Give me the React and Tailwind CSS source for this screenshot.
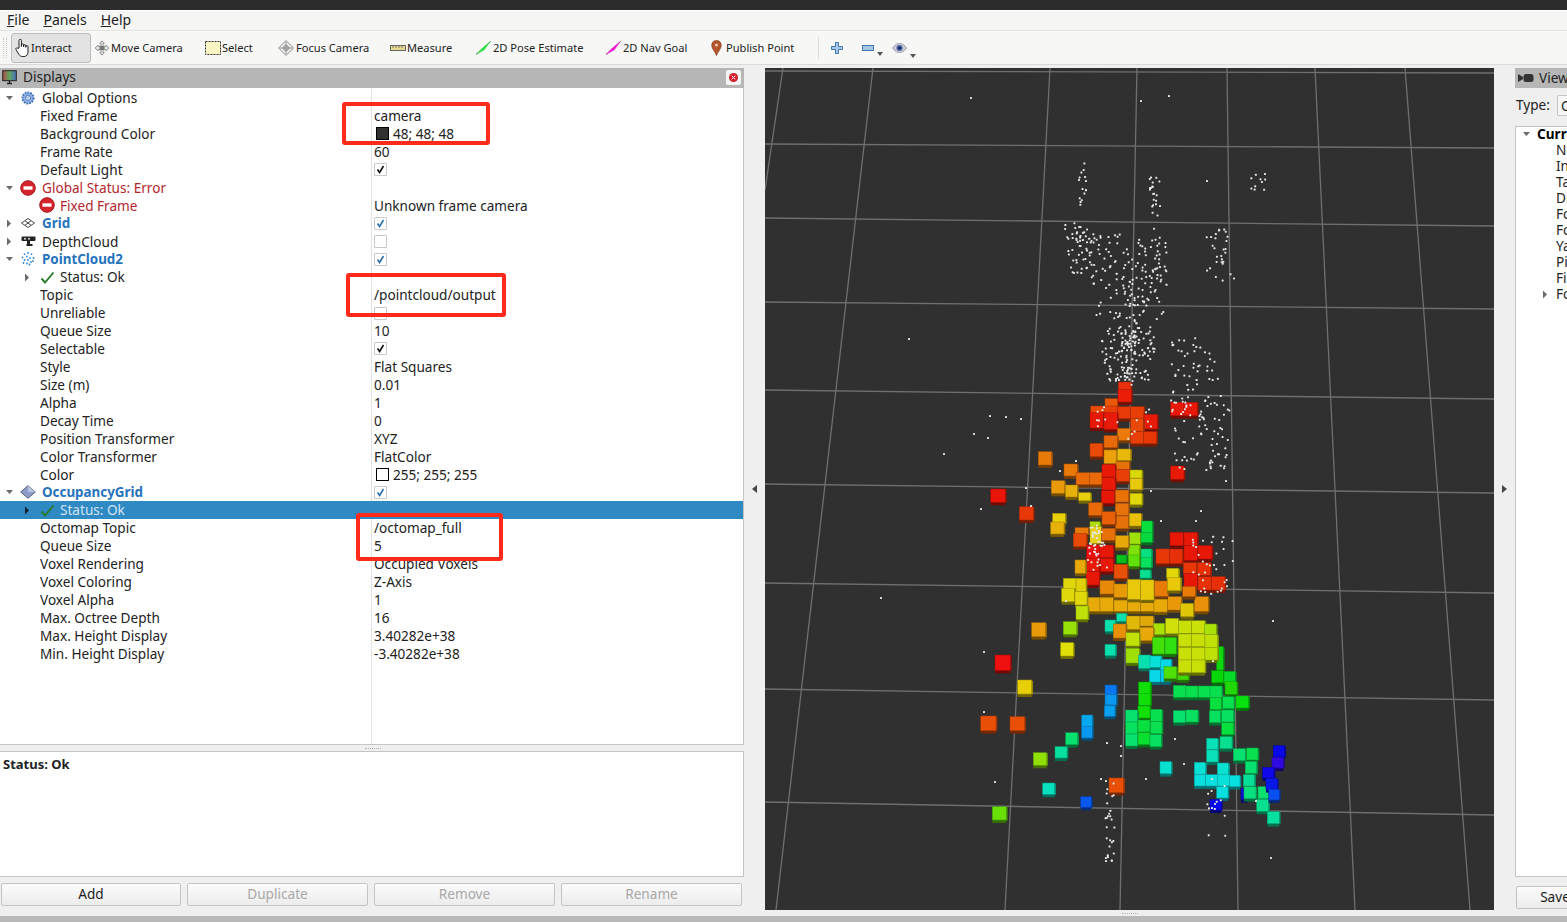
import React from 'react';

const uiFont = { fontFamily: '"Noto Sans", "Liberation Sans", sans-serif' };

function makeRandom(seed) {
  let a = seed;
  return () => {
    a = (a + 0x6d2b79f5) | 0;
    let t = Math.imul(a ^ (a >>> 15), 1 | a);
    t = (t + Math.imul(t ^ (t >>> 7), 61 | t)) ^ t;
    return ((t ^ (t >>> 14)) >>> 0) / 4294967296;
  };
}

// x0, x1 at y0; x2, x3 at y1; count
const dotClusters = [
  [1063, 1085, 1070, 1095, 222, 275, 50],
  [1076, 1086, 1078, 1086, 162, 205, 14],
  [1148, 1158, 1150, 1160, 165, 235, 22],
  [1085, 1170, 1090, 1165, 232, 300, 130],
  [1090, 1165, 1108, 1148, 300, 380, 150],
  [1118, 1135, 1122, 1132, 330, 385, 40],
  [1205, 1225, 1205, 1235, 225, 280, 28],
  [1245, 1265, 1245, 1265, 172, 190, 10],
  [1170, 1200, 1170, 1225, 330, 385, 40],
  [1170, 1230, 1170, 1225, 385, 470, 90],
  [1090, 1100, 1085, 1108, 520, 570, 40],
  [1190, 1232, 1190, 1232, 535, 595, 34],
  [1092, 1150, 1092, 1150, 405, 440, 16],
  [1105, 1115, 1103, 1113, 780, 862, 26],
  [1205, 1225, 1205, 1225, 775, 835, 14],
];

const loneDots = [
  [970, 97], [1168, 95], [908, 338], [880, 597], [943, 453], [987, 437], [973, 433], [1270, 857],
  [1105, 860], [989, 415], [1005, 416], [1020, 418], [980, 508], [1025, 487], [1030, 505], [983, 651],
  [983, 711], [994, 781], [1106, 742], [1120, 745], [1120, 755], [1105, 780], [1145, 778], [1174, 738],
  [1183, 763], [1100, 778], [1212, 660], [1255, 800], [1225, 480], [1200, 510], [1195, 520], [1206, 180],
  [1059, 470], [1075, 460], [1065, 600], [1272, 620], [1160, 520], [1150, 490], [1085, 180], [1140, 100],
];

const rand = makeRandom(42);
const clusterDots = dotClusters.flatMap(([x0, x1, x2, x3, y0, y1, n]) =>
  Array.from({ length: n }, () => {
    const k = rand();
    const left = x0 + (x2 - x0) * k;
    const right = x1 + (x3 - x1) * k;
    return [left + (right - left) * rand(), y0 + (y1 - y0) * k];
  })
);

function darken(hex, f) {
  const n = parseInt(hex.slice(1), 16);
  const c = [(n >> 16) & 255, (n >> 8) & 255, n & 255].map((v) => Math.round(v * f));
  return `rgb(${c[0]},${c[1]},${c[2]})`;
}

// cube coordinates are 3x, relative to the crop they were read from
const upperCubes = [
  [435,86,38,24,'#e85a08'],[475,36,38,30,'#e8300c'],[474,58,40,38,'#ea1e08'],[392,108,40,24,'#ec4808'],
  [432,108,40,30,'#e84008'],[472,110,40,36,'#e83a08'],[512,110,40,36,'#e83e08'],[390,128,40,46,'#e81808'],
  [432,128,40,50,'#e81a0a'],[552,133,40,44,'#e81a08'],[512,146,38,38,'#e84808'],[472,175,40,36,'#ec7a0a'],
  [512,185,40,36,'#e84008'],[550,185,40,36,'#e83808'],[432,197,40,36,'#e86a08'],[432,240,38,40,'#eca00a'],
  [390,220,38,40,'#e84a08'],[472,237,40,34,'#e8b80a'],[632,97,40,40,'#ea1808'],[672,97,40,40,'#e81808'],
  [632,288,40,40,'#e81a08'],[235,245,40,40,'#e87a0a'],[468,275,40,24,'#e87008'],[312,282,40,36,'#ea7a0a'],
  [348,308,40,36,'#e86a08'],[388,308,40,36,'#ea6a08'],[426,283,40,38,'#e81a08'],[468,298,40,36,'#e83e08'],
  [510,300,36,24,'#d8d80a'],[510,325,36,34,'#e8c80a'],[510,370,36,34,'#e0d80a'],[274,332,40,38,'#e89a0a'],
  [316,345,36,36,'#e8b00a'],[356,368,36,24,'#e8d00a'],[426,322,40,38,'#e81a0a'],[424,362,40,38,'#e81808'],
  [466,360,40,36,'#e87208'],[466,400,40,36,'#e8720a'],[466,438,40,38,'#e87008'],[92,357,44,40,'#e81508'],
  [178,410,42,40,'#e83808'],[386,398,40,38,'#e86a08'],[426,425,40,38,'#e86008'],[278,430,38,30,'#e8d00a'],
  [272,456,40,36,'#e8b00a'],[508,430,36,38,'#e8c00a'],[508,488,34,34,'#a0e00a'],[505,525,34,34,'#80e00a'],
  [505,555,34,34,'#60e00a'],[545,453,32,34,'#08e040'],[543,487,34,30,'#08d840'],[543,537,32,28,'#08e080'],
  [543,563,32,30,'#08e060'],[540,600,32,24,'#08e090'],[345,473,40,20,'#e87a0a'],[340,490,40,40,'#e84a08'],
  [390,455,30,24,'#b0e00a'],[390,470,34,50,'#e8d020'],[425,475,40,36,'#e87008'],[466,497,40,36,'#e8a808'],
  [470,555,30,24,'#08c020'],[380,525,40,50,'#e81010'],[420,525,40,38,'#e81808'],[420,565,40,40,'#e81808'],
  [378,565,40,40,'#e81808'],[378,605,40,40,'#e81808'],[345,570,32,40,'#e8a80a'],[462,583,40,42,'#e85008'],
  [588,537,40,44,'#e83808'],[628,537,40,44,'#e83008'],[630,487,40,40,'#e81808'],[672,487,40,40,'#e81808'],
  [672,527,40,44,'#e81808'],[714,527,42,40,'#e81808'],[670,578,40,34,'#e83808'],[712,578,40,38,'#e83008'],
  [672,610,40,42,'#e81808'],[714,620,40,40,'#e83008'],[755,620,40,40,'#e83008'],[310,625,38,32,'#e0d80a'],
  [305,655,38,40,'#e0d80a'],[348,625,30,40,'#e0d00a'],[345,665,36,40,'#e0d80a'],[348,708,36,40,'#c0e00a'],
  [420,632,42,40,'#e88a08'],[462,642,40,40,'#e89a08'],[503,628,38,60,'#e8c808'],[542,630,40,60,'#e8c80a'],
  [584,633,40,46,'#e87a08'],[620,595,36,30,'#e0d808'],[622,622,40,40,'#e8c808'],[668,650,38,30,'#e87a08'],
];

const lowerCubes = [
  [380,-8,40,42,'#e8aa08'],[420,-8,40,42,'#e8aa08'],[462,-8,40,42,'#e8aa08'],[503,-8,38,42,'#e8aa08'],
  [542,-8,40,42,'#e8aa08'],[582,-6,40,42,'#e8aa08'],[622,-10,42,40,'#e89808'],[662,10,38,40,'#e0c808'],
  [703,-10,42,44,'#e89008'],[310,65,40,38,'#98e00a'],[215,68,42,42,'#e89a08'],[302,128,38,40,'#e0e008'],
  [435,133,32,34,'#08e0b0'],[435,60,32,34,'#08e0b0'],[470,40,30,24,'#08e0b0'],[500,48,40,40,'#e0b808'],
  [460,72,38,42,'#e89008'],[540,48,40,30,'#e0a808'],[580,70,34,34,'#a8e008'],[540,82,40,40,'#e8a808'],
  [498,98,40,40,'#c0e008'],[498,145,40,44,'#a0e008'],[578,112,36,50,'#40e008'],[615,112,34,50,'#30e010'],
  [536,165,36,40,'#08e0b0'],[570,168,34,34,'#08e0d8'],[602,178,32,34,'#08d8e8'],[568,210,34,36,'#08d8e8'],
  [602,210,30,36,'#08c8e8'],[650,210,36,30,'#40d808'],[612,200,38,36,'#50e008'],[770,140,20,70,'#10d810'],
  [617,55,38,46,'#d0e008'],[655,62,40,38,'#c8e008'],[695,62,40,38,'#c8e008'],[733,72,36,32,'#a8e008'],
  [655,102,40,38,'#c8e008'],[695,102,40,38,'#c8e008'],[735,104,38,38,'#c0e008'],[655,142,40,38,'#c8e008'],
  [695,142,40,38,'#c8e008'],[735,142,38,38,'#c0e008'],[655,180,40,38,'#c8e008'],[695,180,40,38,'#c8e008'],
  [755,212,36,36,'#08d808'],[792,214,34,36,'#08d828'],[640,256,38,36,'#08e050'],[678,258,36,34,'#08e050'],
  [715,258,36,34,'#08e050'],[750,258,36,34,'#08e050'],[795,245,36,38,'#20d808'],[750,293,34,36,'#08e040'],
  [788,290,34,36,'#08e050'],[828,288,38,36,'#08e010'],[748,332,34,36,'#08e060'],[785,330,36,36,'#08e060'],
  [785,368,36,36,'#08e040'],[640,332,36,36,'#08e070'],[678,330,36,36,'#08e060'],[536,246,36,36,'#10e008'],
  [536,280,36,36,'#10e008'],[534,318,36,36,'#10e008'],[497,330,36,36,'#08e070'],[497,366,36,36,'#08e060'],
  [497,402,36,36,'#08e070'],[534,360,36,36,'#08e040'],[534,398,36,36,'#08e030'],[572,328,34,36,'#08e050'],
  [572,365,34,36,'#08e050'],[570,404,34,36,'#08e060'],[435,255,34,28,'#0878f0'],[435,283,34,32,'#0898f0'],
  [433,317,32,32,'#08a0f0'],[365,345,32,36,'#08a8f0'],[365,380,32,34,'#0898f0'],[362,590,32,32,'#0858f0'],
  [317,398,36,36,'#08e070'],[285,440,36,34,'#08e0a0'],[220,458,40,38,'#90e008'],[248,549,36,34,'#08e0c0'],
  [97,620,42,40,'#68e008'],[105,165,46,46,'#f01010'],[173,240,42,42,'#e8d008'],[62,348,46,44,'#e85008'],
  [150,350,44,42,'#e85008'],[447,534,44,44,'#e85008'],[600,485,34,36,'#08e0d0'],[740,415,34,34,'#08e0b8'],
  [740,450,34,36,'#08e0b8'],[780,410,36,36,'#08e090'],[820,446,36,36,'#08e070'],[860,444,34,36,'#08e050'],
  [856,484,34,36,'#08e070'],[703,487,34,36,'#08e0d8'],[703,524,34,34,'#08e0e0'],[737,524,36,34,'#08e0e0'],
  [772,489,34,36,'#08e0d0'],[772,524,36,34,'#08e0d8'],[808,526,32,34,'#08e0e0'],[770,560,34,34,'#08e0e0'],
  [750,598,34,32,'#0808e8'],[850,524,34,34,'#08e098'],[843,565,20,34,'#1010d0'],[852,560,36,36,'#08e080'],
  [894,560,36,36,'#08e070'],[890,598,36,36,'#08e090'],[922,635,36,36,'#08e0a0'],[940,437,34,34,'#0808e8'],
  [936,472,34,32,'#3008e0'],[908,502,34,32,'#1008e8'],[918,535,34,34,'#0818e8'],[926,568,32,32,'#0850f0'],
];

const gridLines = [
  [783, 68, 765, 190], [873, 68, 776, 910], [1050, 68, 1005, 910], [1137, 68, 1120, 910], [1227, 68, 1238, 910],
  [1315, 68, 1355, 910], [1405, 68, 1470, 910],
  [765, 71, 1494, 73], [765, 144, 1494, 148], [765, 218, 1494, 226], [765, 302, 1494, 309], [765, 390, 1494, 399],
  [765, 484, 1494, 493], [765, 583, 1494, 593], [765, 689, 1494, 700], [765, 802, 1494, 815],
];

function Cube({ c }) {
  const [x, y, w, h, color] = c;
  return (
    <g>
      <rect x={x} y={y + 9} width={w} height={h} fill={darken(color, 0.5)} />
      <rect x={x + w} y={y + 2} width={4} height={h} fill={darken(color, 0.65)} />
      <rect x={x} y={y} width={w} height={h} fill={color} stroke={darken(color, 0.7)} strokeWidth="1.5" />
    </g>
  );
}

function Viewport() {
  return (
    <svg viewBox="765 68 729 842" className="w-[729px] h-[842px] block bg-[#303030]">
      {gridLines.map((l, i) => (
        <line key={i} x1={l[0]} y1={l[1]} x2={l[2]} y2={l[3]} stroke="#6f6f6f" strokeWidth="1.3" />
      ))}
      <g transform="translate(960 600) scale(0.3333)">
        {lowerCubes.map((c, i) => <Cube key={i} c={c} />)}
      </g>
      <g transform="translate(960 370) scale(0.3333)">
        {upperCubes.map((c, i) => <Cube key={i} c={c} />)}
      </g>
      {clusterDots.concat(loneDots).map((d, i) => (
        <rect key={i} x={d[0]} y={d[1]} width="2" height="2" rx="0.6" fill="#e6e6e6" />
      ))}
    </svg>
  );
}

function ArrowDown({ className = '' }) {
  return (
    <svg width="9" height="6" viewBox="0 0 9 6" className={className}><path d="M1 1h7L4.5 5z" fill="#6a6a6a" /></svg>
  );
}

function ArrowRight({ color = '#6a6a6a' }) {
  return (
    <svg width="6" height="9" viewBox="0 0 6 9"><path d="M1 0.5v8L5 4.5z" fill={color} /></svg>
  );
}

function HandIcon() {
  return (
    <svg width="17" height="20" viewBox="0 0 17 20" fill="#fff" stroke="#222" strokeWidth="1">
      <path d="M5 10V2.6a1.2 1.2 0 0 1 2.4 0V8.5V7a1.1 1.1 0 0 1 2.2 0v2V7.8a1.1 1.1 0 0 1 2.2 0v1.6V8.6a1.1 1.1 0 0 1 2.2 0V14c0 2.5-1.5 4.5-4 4.5H8.5c-1.8 0-3-1-3.8-2.4L2 11.6c-.8-1.4 1-2.4 2-1.2z" />
    </svg>
  );
}

function MoveIcon() {
  return (
    <svg width="16" height="16" viewBox="0 0 16 16" fill="#e8e8e8" stroke="#8a8a8a" strokeWidth="0.9">
      <path d="M8 .8l2.4 2.6H9v3h3V5l2.8 3-2.8 3V9.6H9v3h1.4L8 15.2l-2.4-2.6H7v-3H4V11L1.2 8 4 5v1.4h3v-3H5.6z" />
      <rect x="5.5" y="6" width="5" height="4" fill="#777" stroke="none" />
    </svg>
  );
}

function SelectIcon() {
  return (
    <svg width="16" height="14" viewBox="0 0 16 14">
      <rect x="0.5" y="0.5" width="15" height="13" fill="#fbf6c4" stroke="#333" strokeWidth="1" strokeDasharray="2 1" />
    </svg>
  );
}

function FocusIcon() {
  return (
    <svg width="16" height="16" viewBox="0 0 16 16" fill="none" stroke="#8d8d8d" strokeWidth="1">
      <path d="M8 .5L15.5 8 8 15.5.5 8z" fill="#eee" />
      <circle cx="8" cy="8" r="2.6" fill="#ccc" />
      <path d="M8 2v12M2 8h12" />
    </svg>
  );
}

function MeasureIcon() {
  return (
    <svg width="16" height="6" viewBox="0 0 16 6">
      <rect x="0.5" y="0.5" width="15" height="5" fill="#e6d98f" stroke="#666" />
      <path d="M3 1v2M6 1v2M9 1v2M12 1v2" stroke="#666" strokeWidth="0.8" />
    </svg>
  );
}

function ArrowIcon({ color, dark }) {
  return (
    <svg width="16" height="14" viewBox="0 0 16 14">
      <path d="M1 13.500L15.500 .5" stroke={dark} strokeWidth="1" />
      <path d="M1.500 13.500L6.500 7.500 15.500 .5 9.500 9z" fill={color} />
    </svg>
  );
}

function PinIcon() {
  return (
    <svg width="11" height="16" viewBox="0 0 11 16">
      <path d="M5.5.5C2.6.5.7 2.6.7 5.2c0 3.4 3.4 6.6 4.8 10.3 1.4-3.7 4.8-6.9 4.8-10.3C10.300 2.600 8.400.500 5.500.500z" fill="#b5532a" stroke="#7c3a1e" strokeWidth="0.6" />
      <circle cx="5.500" cy="5" r="1.600" fill="#e9c3ae" />
    </svg>
  );
}

function PlusIcon() {
  return (
    <svg width="12" height="12" viewBox="0 0 12 12">
      <path d="M4.500.500h3v4h4v3h-4v4h-3v-4h-4v-3h4z" fill="#a9c6e6" stroke="#3f77b2" />
    </svg>
  );
}

function MinusIcon() {
  return (
    <svg width="12" height="6" viewBox="0 0 12 6">
      <rect x="0.500" y="0.500" width="11" height="5" fill="#a9c6e6" stroke="#3f77b2" />
    </svg>
  );
}

function EyeIcon() {
  return (
    <svg width="15" height="10" viewBox="0 0 15 10">
      <path d="M.5 5C3 1.500 5 .500 7.500 .500S12 1.500 14.500 5C12 8.500 10 9.500 7.500 9.500S3 8.500 .500 5z" fill="#c9ccd4" stroke="#9aa0aa" />
      <circle cx="7.500" cy="5" r="3" fill="#4a5fa8" />
      <circle cx="7.500" cy="5" r="1.300" fill="#111a40" />
    </svg>
  );
}

function DropMark() {
  return <svg width="6" height="4" viewBox="0 0 6 4" className="absolute right-[-9px] bottom-[-5px]"><path d="M0 0h6L3 4z" fill="#555" /></svg>;
}

function MonitorIcon() {
  return (
    <svg width="15" height="15" viewBox="0 0 15 15">
      <defs>
        <linearGradient id="screen" x1="0" x2="1" y1="0" y2="0">
          <stop offset="0" stopColor="#b04a4a" />
          <stop offset="0.5" stopColor="#5fa85f" />
          <stop offset="1" stopColor="#4a6fc0" />
        </linearGradient>
      </defs>
      <rect x="0.700" y="0.700" width="13.600" height="10" fill="url(#screen)" stroke="#222" />
      <path d="M5 13.500h5M7.500 11v2.500" stroke="#222" strokeWidth="1.400" />
    </svg>
  );
}

function GearIcon() {
  return (
    <svg width="14" height="14" viewBox="0 0 14 14">
      <circle cx="7" cy="7" r="5.600" fill="#8fb0e0" stroke="#3f6fb5" strokeWidth="1.800" strokeDasharray="1.800 1" />
      <circle cx="7" cy="7" r="2.600" fill="#bcd0ee" stroke="#4a78bb" strokeWidth="0.800" />
    </svg>
  );
}

function ErrorIcon() {
  return (
    <svg width="16" height="16" viewBox="0 0 16 16">
      <circle cx="8" cy="8" r="7.300" fill="#d5242c" stroke="#a5161c" />
      <rect x="3.500" y="6.300" width="9" height="3.400" fill="#fff" />
    </svg>
  );
}

function GridIcon() {
  return (
    <svg width="14" height="10" viewBox="0 0 14 10" fill="none" stroke="#333" strokeWidth="0.900">
      <path d="M7 .5L13.500 5 7 9.500 .5 5z" />
      <path d="M4 2.800L10 7.200M10 2.800L4 7.200" />
    </svg>
  );
}

function KinectIcon() {
  return (
    <svg width="15" height="11" viewBox="0 0 15 11">
      <rect x="0.500" y="0.500" width="14" height="4.500" rx="1" fill="#222" />
      <circle cx="4" cy="2.700" r="1" fill="#ddd" />
      <circle cx="8" cy="2.700" r="1" fill="#ddd" />
      <path d="M6 5h3v3h2.500v2h-6v-2H6z" fill="#222" />
    </svg>
  );
}

function CloudIcon() {
  return (
    <svg width="14" height="14" viewBox="0 0 14 14" fill="#2f86d8">
      {[[7,1],[3.500,2.200],[10.500,2.200],[1.500,5.500],[6,4.500],[9,6],[12.500,6],[3.500,8],[7,8],[2.500,11],[6,11.500],[10,10],[12,9],[8.500,12.500]].map((p, i) => (
        <circle key={i} cx={p[0]} cy={p[1]} r="0.900" />
      ))}
    </svg>
  );
}

function DiamondIcon() {
  return (
    <svg width="16" height="14" viewBox="0 0 16 14">
      <path d="M8 .7L15.300 7 8 13.300 .7 7z" fill="#8f9cc9" stroke="#555b70" />
      <path d="M8 .7L15.300 7 8 7z" fill="#b7c1e2" />
    </svg>
  );
}

function OkIcon() {
  return (
    <svg width="15" height="13" viewBox="0 0 15 13" fill="none">
      <path d="M1.500 7.500L5 11.500 13.500 1.500" stroke="#2b7a2b" strokeWidth="1.900" />
    </svg>
  );
}

function CheckBox({ on, blue }) {
  return (
    <span className="w-[13px] h-[13px] bg-white border border-[#c9c9c9] rounded-[1px] flex items-center justify-center">
      {on && (
        <svg width="9" height="9" viewBox="0 0 9 9" fill="none">
          <path d="M1.500 4.500L3.600 7.500 7.500 1" stroke={blue ? '#2a6fb0' : '#111'} strokeWidth="1.600" />
        </svg>
      )}
    </span>
  );
}

const rows = [
  { arrow: 'down', icon: <GearIcon />, label: 'Global Options' },
  { label: 'Fixed Frame', value: 'camera' },
  { label: 'Background Color', value: '48; 48; 48', swatch: 'bg-[#303030]' },
  { label: 'Frame Rate', value: '60' },
  { label: 'Default Light', check: 'on' },
  { arrow: 'down', icon: <ErrorIcon />, label: 'Global Status: Error', tone: 'error' },
  { child: true, icon: <ErrorIcon />, label: 'Fixed Frame', tone: 'error', value: 'Unknown frame camera' },
  { arrow: 'right', icon: <GridIcon />, label: 'Grid', tone: 'plugin', check: 'blue' },
  { arrow: 'right', icon: <KinectIcon />, label: 'DepthCloud', check: 'off' },
  { arrow: 'down', icon: <CloudIcon />, label: 'PointCloud2', tone: 'plugin', check: 'blue' },
  { child: true, arrow: 'right', icon: <OkIcon />, label: 'Status: Ok' },
  { label: 'Topic', value: '/pointcloud/output' },
  { label: 'Unreliable', check: 'off' },
  { label: 'Queue Size', value: '10' },
  { label: 'Selectable', check: 'on' },
  { label: 'Style', value: 'Flat Squares' },
  { label: 'Size (m)', value: '0.01' },
  { label: 'Alpha', value: '1' },
  { label: 'Decay Time', value: '0' },
  { label: 'Position Transformer', value: 'XYZ' },
  { label: 'Color Transformer', value: 'FlatColor' },
  { label: 'Color', value: '255; 255; 255', swatch: 'bg-white' },
  { arrow: 'down', icon: <DiamondIcon />, label: 'OccupancyGrid', tone: 'plugin', check: 'blue' },
  { child: true, arrow: 'right', icon: <OkIcon />, label: 'Status: Ok', selected: true },
  { label: 'Octomap Topic', value: '/octomap_full' },
  { label: 'Queue Size', value: '5' },
  { label: 'Voxel Rendering', value: 'Occupied Voxels' },
  { label: 'Voxel Coloring', value: 'Z-Axis' },
  { label: 'Voxel Alpha', value: '1' },
  { label: 'Max. Octree Depth', value: '16' },
  { label: 'Max. Height Display', value: '3.40282e+38' },
  { label: 'Min. Height Display', value: '-3.40282e+38' },
];

function Row({ row }) {
  const toneClass = row.tone === 'error'
    ? 'text-[#b3272d]'
    : row.tone === 'plugin'
      ? 'text-[#2673bd] font-bold text-[13.4px]'
      : row.selected
        ? 'text-[#d3e4f1]'
        : 'text-[#222]';
  return (
    <div className={`flex h-[17.93px] items-center text-[13.6px] leading-none ${row.selected ? 'bg-[#2f8ac4]' : ''}`}>
      <div className={`w-[371px] flex items-center shrink-0 ${toneClass}`}>
        {row.icon ? (
          <>
            {row.child && <span className="w-[18px]" />}
            <span className="w-[18px] flex justify-center">
              {row.arrow === 'down' && <ArrowDown />}
              {row.arrow === 'right' && <ArrowRight color={row.selected ? '#123' : '#6a6a6a'} />}
            </span>
            <span className={`flex justify-center ${row.child ? 'w-[22px] mr-[2px]' : 'w-[20px] mr-[4px]'}`}>{row.icon}</span>
          </>
        ) : (
          <span className="w-[40px]" />
        )}
        <span>{row.label}</span>
      </div>
      <div className="flex-1 flex items-center pl-[3px] text-[#222]">
        {row.swatch && <span className={`w-[13px] h-[13px] ml-[2px] mr-[4px] border border-black ${row.swatch}`} />}
        {row.value && <span>{row.value}</span>}
        {row.check && <CheckBox on={row.check !== 'off'} blue={row.check === 'blue'} />}
      </div>
    </div>
  );
}

function ToolButton({ width, pad, gap = 'gap-[2px]', active, icon, label }) {
  return (
    <div
      className={`h-[30px] flex items-center shrink-0 ${gap} ${active ? 'bg-[#e3e3e3] border border-[#bcbcbc] rounded-[3px]' : ''} ${width} ${pad}`}
    >
      {icon}
      <span className="text-[11.1px] text-[#222] whitespace-nowrap pt-px">{label}</span>
    </div>
  );
}

function ActionButton({ label, disabled, width }) {
  return (
    <button className={`h-[23px] ${width} rounded-[2px] border border-[#c4c4c4] bg-gradient-to-b from-[#fbfbfb] to-[#ececec] text-[13.6px] ${disabled ? 'text-[#a8a8a8]' : 'text-[#1c1c1c]'}`}>
      {label}
    </button>
  );
}

const viewRows = ['Near Clip Distance', 'Invert Z Axis', 'Target Frame', 'Distance', 'Focal Shape Size', 'Focal Shape Fixed Size', 'Yaw', 'Pitch', 'Field of View'];

export default function App() {
  return (
    <div className="relative w-[1567px] h-[922px] overflow-hidden flex flex-col bg-[#efefef]" style={uiFont}>
      <div className="h-[10px] bg-[#2c2c2c]" />

      <div className="h-[20px] bg-[#f5f5f4] border-t border-white flex items-center pl-[7px] pb-[2px] gap-[13px] text-[14px] text-[#222]">
        <span className="mr-[1px]"><u>F</u>ile</span>
        <span><u>P</u>anels</span>
        <span className="ml-[1px]"><u>H</u>elp</span>
      </div>

      <div className="h-[35px] bg-[#f7f7f6] border-t border-[#e4e4e4] border-b border-b-[#d9d9d9] flex items-center pl-[3px]">
        <span className="w-[4px] h-[20px] mr-[4px] border-x border-dotted border-[#c8c8c8]" />
        <ToolButton active width="w-[80px]" pad="pl-[2px]" gap="gap-0" icon={<HandIcon />} label="Interact" />
        <ToolButton width="w-[114px]" pad="pl-[3px]" gap="gap-[1px]" icon={<MoveIcon />} label="Move Camera" />
        <ToolButton width="w-[73px]" pad="" gap="gap-[1px]" icon={<SelectIcon />} label="Select" />
        <ToolButton width="w-[112px]" pad="" icon={<FocusIcon />} label="Focus Camera" />
        <ToolButton width="w-[85px]" pad="" gap="gap-[1px]" icon={<MeasureIcon />} label="Measure" />
        <ToolButton width="w-[130px]" pad="" icon={<ArrowIcon color="#35e04a" dark="#157a24" />} label="2D Pose Estimate" />
        <ToolButton width="w-[106px]" pad="" icon={<ArrowIcon color="#f01fd6" dark="#8a1080" />} label="2D Nav Goal" />
        <ToolButton width="w-[107px]" pad="" gap="gap-[4px]" icon={<PinIcon />} label="Publish Point" />
        <span className="w-px h-[22px] bg-[#dcdcdc]" />
        <span className="ml-[12px] flex"><PlusIcon /></span>
        <span className="ml-[19px] relative flex"><MinusIcon /><DropMark /></span>
        <span className="ml-[18px] relative flex"><EyeIcon /><DropMark /></span>
      </div>

      <div className="h-[3px]" />

      <div className="flex-1 flex min-h-0">
        <div className="w-[744px] flex flex-col shrink-0">
          <div className="h-[20px] bg-[#b6b6b6] flex items-center pl-[2px] pr-[3px] pb-px text-[13.6px] text-[#222] shrink-0">
            <MonitorIcon />
            <span className="ml-[6px] flex-1">Displays</span>
            <span className="w-[15px] h-[15px] bg-[#f4f4f4] rounded-[2px] flex items-center justify-center">
              <span className="w-[9px] h-[9px] rounded-full bg-[#d0202c] flex items-center justify-center">
                <svg width="5" height="5" viewBox="0 0 5 5"><path d="M.7.7l3.600 3.600M4.300.7L.7 4.300" stroke="#fff" strokeWidth="1" /></svg>
              </span>
            </span>
          </div>

          <div className="flex-1 min-h-0 bg-white border-r border-b border-[#c4c4c4] relative overflow-hidden pt-px">
            <div className="absolute left-[371px] top-0 bottom-0 w-px bg-[#e2e2e2]" />
            <div className="relative">
              {rows.map((row, i) => <Row key={i} row={row} />)}
            </div>
          </div>

          <div className="h-[6px] flex items-center justify-center shrink-0">
            <span className="w-[16px] border-t border-dotted border-[#b5b5b5] ml-[2px]" />
          </div>

          <div className="h-[126px] bg-white border border-l-0 border-[#c4c4c4] shrink-0 pl-[3px] pt-[4px] text-[13px] leading-[16px] font-bold text-[#222]">
            Status: Ok
          </div>

          <div className="h-[39px] shrink-0 flex items-start pt-[6px] pl-[1px] gap-[6px]">
            <ActionButton label="Add" width="w-[180px]" />
            <ActionButton label="Duplicate" disabled width="w-[181px]" />
            <ActionButton label="Remove" disabled width="w-[181px]" />
            <ActionButton label="Rename" disabled width="w-[181px]" />
          </div>
        </div>

        <div className="w-[21px] shrink-0 flex items-center justify-center pb-[6px]">
          <svg width="5" height="8" viewBox="0 0 5 8"><path d="M5 0v8L0 4z" fill="#444" /></svg>
        </div>

        <div className="w-[729px] shrink-0">
          <Viewport />
          <div className="h-[6px] flex items-center justify-center">
            <span className="w-[16px] border-t border-dotted border-[#b5b5b5]" />
          </div>
        </div>

        <div className="w-[21px] shrink-0 flex items-center justify-center pb-[6px]">
          <svg width="5" height="8" viewBox="0 0 5 8"><path d="M0 0v8L5 4z" fill="#444" /></svg>
        </div>

        <div className="w-[52px] shrink-0 overflow-hidden flex flex-col">
          <div className="w-[200px] flex flex-col h-full">
            <div className="h-[20px] bg-[#b6b6b6] flex items-center pl-[3px] text-[13.6px] text-[#222] shrink-0">
              <svg width="16" height="10" viewBox="0 0 16 10">
                <path d="M0 1l5 3V6L0 9z" fill="#333" />
                <rect x="5.500" y="1" width="10" height="8" rx="2.500" fill="#333" />
              </svg>
              <span className="ml-[5px]">Views</span>
            </div>
            <div className="h-[38px] flex items-center pl-[1px] pb-[3px] text-[13.6px] text-[#222] shrink-0">
              <span>Type:</span>
              <span className="ml-[7px] w-[100px] h-[21px] border border-[#c4c4c4] rounded-[2px] bg-[#f7f7f7] pl-[3px] leading-[19px]">Orbit</span>
            </div>
            <div className="flex-1 min-h-0 bg-white border border-[#c4c4c4] text-[13.6px] text-[#222]">
              <div className="h-[14px] mb-px flex items-center font-bold text-black leading-none">
                <span className="w-[21px] flex justify-center"><ArrowDown /></span>
                <span>Current View</span>
              </div>
              {viewRows.map((name) => (
                <div key={name} className="h-[16px] flex items-center pl-[40px] leading-none whitespace-nowrap">{name}</div>
              ))}
              <div className="h-[16px] flex items-center leading-none">
                <span className="w-[40px] flex justify-center pl-[17px]"><ArrowRight /></span>
                <span>Focal Point</span>
              </div>
            </div>
            <div className="h-[39px] shrink-0 pt-[7px] pl-[1px]">
              <ActionButton label="Save" width="w-[78px]" />
            </div>
          </div>
        </div>
      </div>

      <div className="h-[6px] bg-[#b9b9b9] shrink-0" />

      <div className="absolute left-[342px] top-[102px] w-[148px] h-[43px] border-[4px] border-[#ff2a1a] rounded-[3px]" />
      <div className="absolute left-[346px] top-[273px] w-[160px] h-[44px] border-[4px] border-[#ff2a1a] rounded-[3px]" />
      <div className="absolute left-[356px] top-[513px] w-[147px] h-[48px] border-[4px] border-[#ff2a1a] rounded-[3px]" />
    </div>
  );
}
